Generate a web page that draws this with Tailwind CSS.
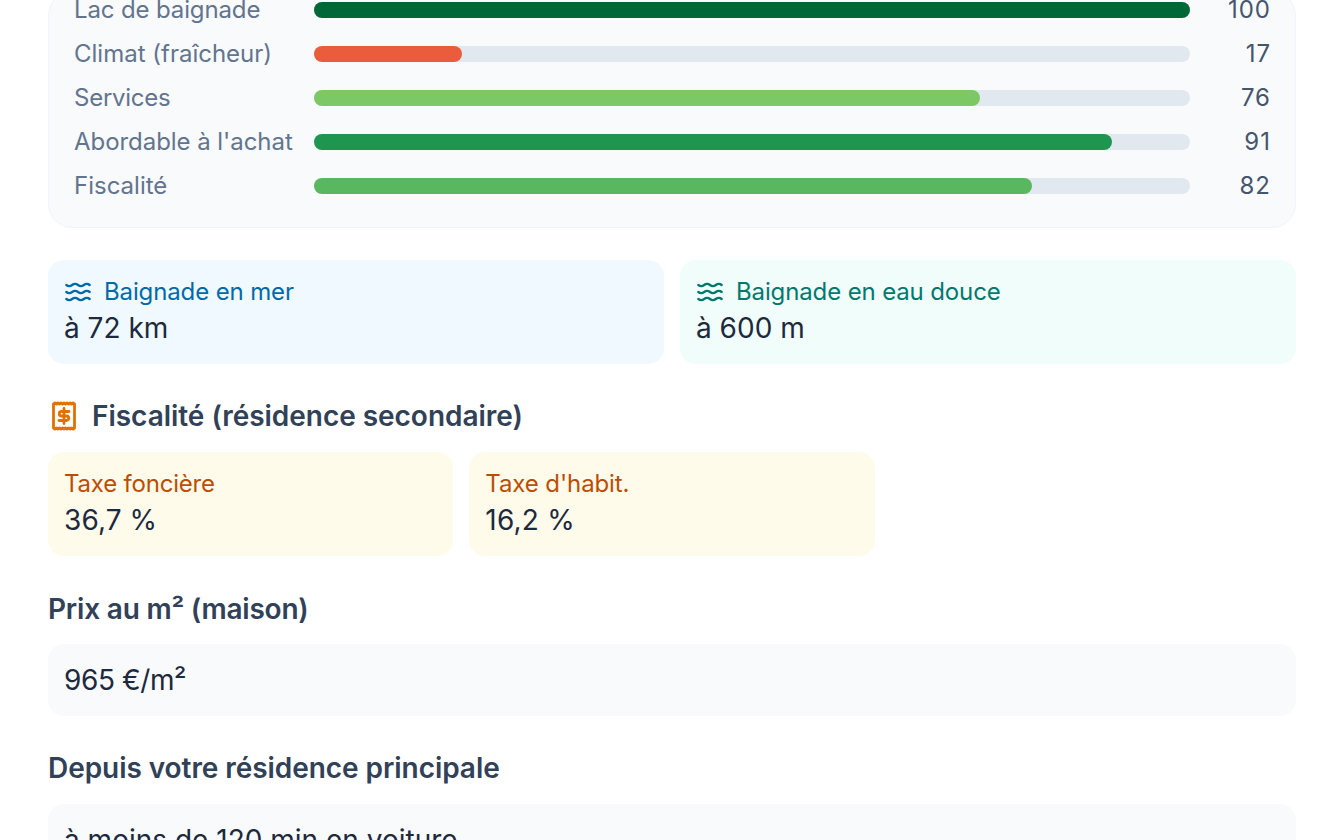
<!DOCTYPE html>
<html lang="fr">
<head>
    <meta charset="UTF-8">
    <meta name="viewport" content="width=device-width, initial-scale=1.0">
    <title>Fiche commune</title>
    <script src="https://cdn.jsdelivr.net/npm/@tailwindcss/browser@4"></script>
</head>
<body class="bg-white font-['Inter',sans-serif] text-slate-800">
    <div class="h-[840px] overflow-hidden">
        <div class="px-12 -mt-[9px]">
            <!-- Scores -->
            <div class="bg-slate-50 border border-slate-100 rounded-3xl px-[25px] pt-[4px] pb-[27px] flex flex-col gap-4">
                <div class="flex items-center h-7">
                    <span class="w-60 shrink-0 text-2xl leading-7 tracking-[-0.13px] text-slate-500">Lac de baignade</span>
                    <div class="flex-1 h-4 rounded-full bg-slate-200"><div class="h-4 rounded-full bg-[#006837]" style="width:100%"></div></div>
                    <span class="w-20 text-right text-2xl leading-7 tracking-[1px] translate-x-px text-slate-600">100</span>
                </div>
                <div class="flex items-center h-7">
                    <span class="w-60 shrink-0 text-2xl leading-7 text-slate-500">Climat (fraîcheur)</span>
                    <div class="flex-1 h-4 rounded-full bg-slate-200"><div class="h-4 rounded-full bg-[#e95d3c]" style="width:16.9%"></div></div>
                    <span class="w-20 text-right text-2xl leading-7 tracking-[1px] translate-x-px text-slate-600">17</span>
                </div>
                <div class="flex items-center h-7">
                    <span class="w-60 shrink-0 text-2xl leading-7 tracking-[-0.25px] text-slate-500">Services</span>
                    <div class="flex-1 h-4 rounded-full bg-slate-200"><div class="h-4 rounded-full bg-[#7cc864]" style="width:76%"></div></div>
                    <span class="w-20 text-right text-2xl leading-7 tracking-[1px] translate-x-px text-slate-600">76</span>
                </div>
                <div class="flex items-center h-7">
                    <span class="w-60 shrink-0 text-2xl leading-7 tracking-[-0.05px] text-slate-500">Abordable à l'achat</span>
                    <div class="flex-1 h-4 rounded-full bg-slate-200"><div class="h-4 rounded-full bg-[#1f9650]" style="width:91.1%"></div></div>
                    <span class="w-20 text-right text-2xl leading-7 tracking-[1px] translate-x-px text-slate-600">91</span>
                </div>
                <div class="flex items-center h-7">
                    <span class="w-60 shrink-0 text-2xl leading-7 text-slate-500">Fiscalité</span>
                    <div class="flex-1 h-4 rounded-full bg-slate-200"><div class="h-4 rounded-full bg-[#59b75f]" style="width:82%"></div></div>
                    <span class="w-20 text-right text-2xl leading-7 tracking-[1px] translate-x-px text-slate-600">82</span>
                </div>
            </div>

            <!-- Baignade -->
            <div class="grid grid-cols-2 gap-4 mt-8">
                <div class="bg-sky-50 rounded-2xl p-4">
                    <div class="flex items-center gap-3 h-8 text-2xl tracking-[-0.13px] text-sky-700">
                        <svg class="w-7 h-7" viewBox="0 0 24 24" fill="none" stroke="currentColor" stroke-width="2" stroke-linecap="round" stroke-linejoin="round"><path d="M2 6c.6.5 1.2 1 2.5 1C7 7 7 5 9.5 5c2.6 0 2.4 2 5 2 2.5 0 2.5-2 5-2 1.3 0 1.9.5 2.5 1"/><path d="M2 12c.6.5 1.2 1 2.5 1 2.5 0 2.5-2 5-2 2.6 0 2.4 2 5 2 2.5 0 2.5-2 5-2 1.3 0 1.9.5 2.5 1"/><path d="M2 18c.6.5 1.2 1 2.5 1 2.5 0 2.5-2 5-2 2.6 0 2.4 2 5 2 2.5 0 2.5-2 5-2 1.3 0 1.9.5 2.5 1"/></svg>
                        <span>Baignade en mer</span>
                    </div>
                    <p class="text-[28px] leading-10 text-slate-800">à 72 km</p>
                </div>
                <div class="bg-teal-50 rounded-2xl p-4">
                    <div class="flex items-center gap-3 h-8 text-2xl tracking-[-0.13px] text-teal-700">
                        <svg class="w-7 h-7" viewBox="0 0 24 24" fill="none" stroke="currentColor" stroke-width="2" stroke-linecap="round" stroke-linejoin="round"><path d="M2 6c.6.5 1.2 1 2.5 1C7 7 7 5 9.5 5c2.6 0 2.4 2 5 2 2.5 0 2.5-2 5-2 1.3 0 1.9.5 2.5 1"/><path d="M2 12c.6.5 1.2 1 2.5 1 2.5 0 2.5-2 5-2 2.6 0 2.4 2 5 2 2.5 0 2.5-2 5-2 1.3 0 1.9.5 2.5 1"/><path d="M2 18c.6.5 1.2 1 2.5 1 2.5 0 2.5-2 5-2 2.6 0 2.4 2 5 2 2.5 0 2.5-2 5-2 1.3 0 1.9.5 2.5 1"/></svg>
                        <span>Baignade en eau douce</span>
                    </div>
                    <p class="text-[28px] leading-10 text-slate-800">à 600 m</p>
                </div>
            </div>

            <!-- Fiscalite -->
            <div class="flex items-center gap-3 mt-[34px] h-9 text-[28px] font-semibold tracking-[-0.03px] text-slate-700">
                <svg class="w-8 h-8 text-amber-600" viewBox="0 0 32 32" fill="none" stroke="currentColor" stroke-width="2.8" stroke-linejoin="round" stroke-linecap="round"><path d="M5.5 4l1.5-1 1.5 1 1.5-1 1.5 1 1.5-1 1.5 1 1.5-1 1.5 1 1.5-1 1.5 1 1.5-1 1.5 1 1.5-1 1.5 1v24l-1.5 1-1.5-1-1.5 1-1.5-1-1.5 1-1.5-1-1.5 1-1.5-1-1.5 1-1.5-1-1.5 1-1.5-1-1.5 1-1.5-1z"/><path d="M21 11.5h-7.5a2.25 2.25 0 0 0 0 4.5h5a2.25 2.25 0 0 1 0 4.5H11"/><path d="M16 8.5v15"/></svg>
                <span>Fiscalité (résidence secondaire)</span>
            </div>
            <div class="grid grid-cols-3 gap-4 mt-[18px]">
                <div class="bg-amber-50 rounded-2xl p-4">
                    <p class="h-8 leading-8 text-2xl tracking-[-0.2px] text-amber-700">Taxe foncière</p>
                    <p class="text-[28px] leading-10 tracking-[0.1px] text-slate-800">36,7 %</p>
                </div>
                <div class="bg-amber-50 rounded-2xl p-4">
                    <p class="h-8 leading-8 text-2xl tracking-[-0.1px] text-amber-700">Taxe d'habit.</p>
                    <p class="text-[28px] leading-10 tracking-[0.2px] text-slate-800">16,2 %</p>
                </div>
            </div>

            <!-- Prix -->
            <h3 class="mt-[35px] h-9 leading-9 text-[28px] font-semibold tracking-[-0.2px] text-slate-700">Prix au m² (maison)</h3>
            <div class="bg-slate-50 rounded-2xl p-4 mt-[17px] text-[28px] leading-10 tracking-[-0.4px] text-slate-800">965 €/m²</div>

            <!-- Trajet -->
            <h3 class="mt-[34px] h-9 leading-9 text-[28px] font-semibold tracking-[-0.06px] text-slate-700">Depuis votre résidence principale</h3>
            <div class="bg-slate-50 rounded-2xl p-4 mt-[18px] text-[28px] leading-10 text-slate-800">à moins de 120 min en voiture</div>
        </div>
    </div>
</body>
</html>
